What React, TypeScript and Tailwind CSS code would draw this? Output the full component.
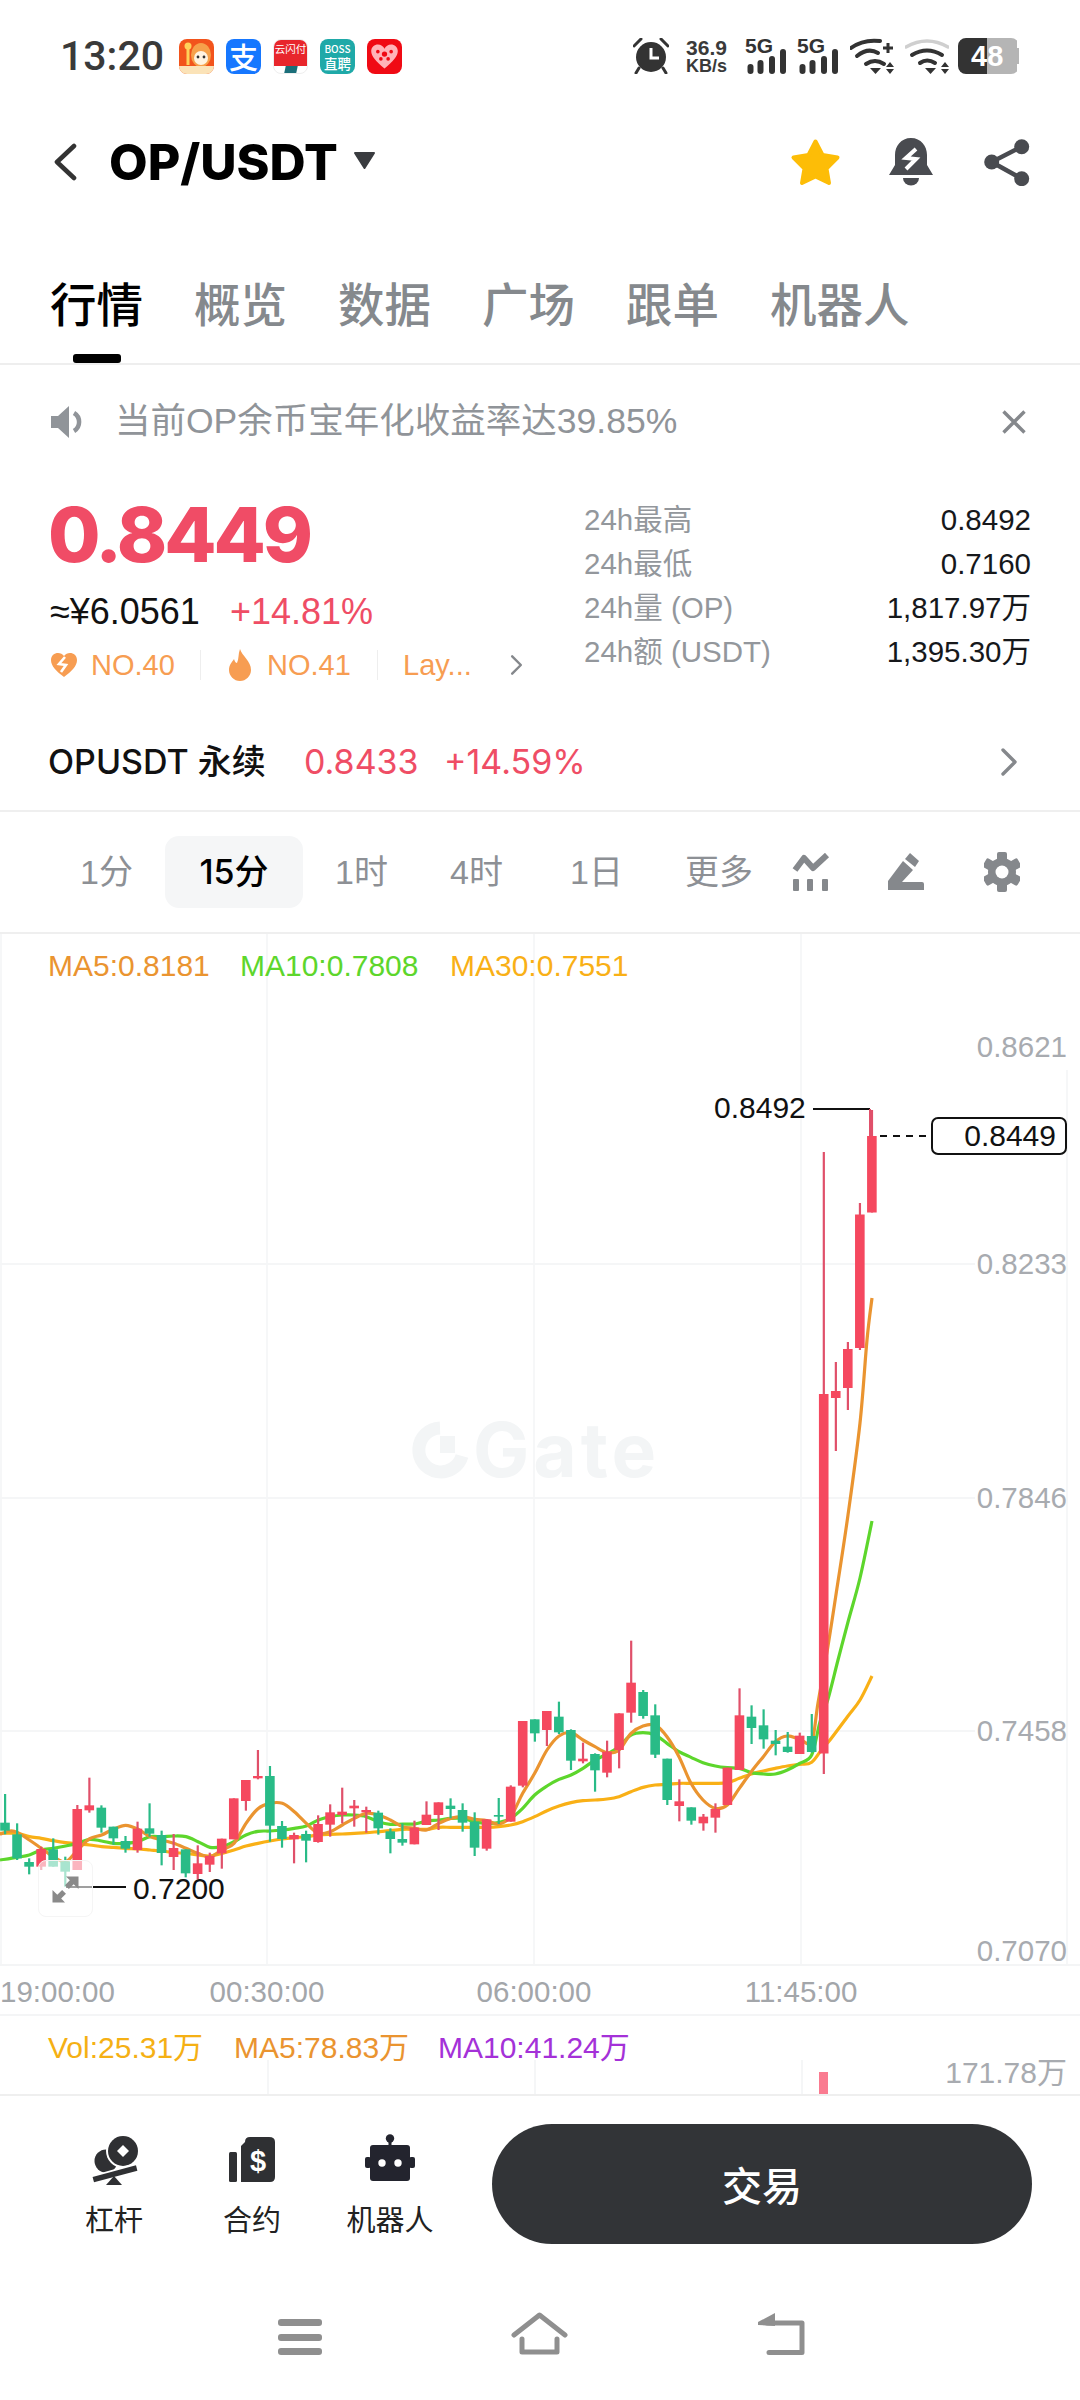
import React from "react";

type C = [number, number, number, number, number, number];
// [up, wickTop, bodyTop, bodyBottom, wickBottom] measured in zoom coordinates
const z5: number[][] = [
  [0,462,548,572,583],[0,550,583,655,660],[0,655,666,680,703],[1,620,627,680,690],[0,595,628,680,680],[0,650,664,695,740],
  [1,495,507,690,690],[1,413,496,511,518],[0,496,503,563,578],[0,560,560,595,614],[0,588,603,626,638],[1,545,566,630,638],
  [0,490,565,581,590],[0,572,585,639,676],[1,582,624,651,690],[0,628,628,700,712],[1,616,670,702,718],[1,638,648,674,696],
  [1,596,596,640,686],[1,475,475,598,598],[1,420,420,483,512],[1,330,408,415,418],[0,378,408,557,605],[0,543,558,597,623],
  [1,578,585,598,670],[0,572,582,602,667],[1,526,552,606,608],[1,493,517,554,590],[1,443,515,525,550],[1,480,497,505,560],
  [1,500,510,517,578],[0,512,518,565,584],[0,565,574,597,640],[0,550,597,608,617],
];
const z6: number[][] = [
  [1,662,683,733,733],[1,604,644,675,675],[1,607,607,645,690],[0,595,617,627,655],[0,610,630,668,695],[0,637,665,743,768],
  [1,658,658,746,752],[0,594,645,650,672],[1,556,560,665,665],[1,363,363,557,562],[0,358,358,400,425],[1,333,333,390,438],
  [0,305,350,397,402],[0,388,390,482,510],[1,428,476,484,490],[0,460,462,511,575],[1,422,455,518,532],[1,340,340,450,505],
  [1,122,248,338,368],[0,270,276,348,356],[0,313,346,464,474],[0,476,476,600,615],[1,538,604,618,664],[0,622,622,662,674],
  [1,642,650,670,692],[1,610,627,653,698],[1,503,503,615,615],[1,265,346,510,510],[0,316,350,384,432],[0,328,376,418,446],
  [0,390,422,432,466],[0,396,440,456,458],[1,398,407,462,462],[0,342,408,456,458],
];
const real: number[][] = [
  [1,1152,1394,1753.5,1774],[1,1362,1391,1398,1451],[1,1342,1349,1388,1410],[1,1203,1214.5,1348,1350],[1,1110,1136,1212.5,1212.5],
];
const candles: C[] = [
  ...z5.map((c, i): C => [5 + 12.04 * i, c[0], c[1] / 3 + 1640, c[2] / 3 + 1640, c[3] / 3 + 1640, c[4] / 3 + 1640]),
  ...z6.map((c, i): C => [5 + 12.04 * (i + 34), c[0], c[1] / 3 + 1600, c[2] / 3 + 1600, c[3] / 3 + 1600, c[4] / 3 + 1600]),
  ...real.map((c, i): C => [5 + 12.04 * (i + 68), c[0], c[1], c[2], c[3], c[4]]),
];

const a = (pts: number[][]) => pts.map(([x, y]) => [x / 3, y / 3 + 1640]);
const b = (pts: number[][]) => pts.map(([x, y]) => [x / 3 + 400, y / 3 + 1600]);

const ma5 = [
  ...a([[0,583],[30,573],[52,577],[88,600],[124,625],[160,650],[197,665],[233,630],[269,596],[305,585],[341,567],[377,556],[413,567],[450,590],[486,600],[521,610],[558,625],[594,640],[630,650],[666,630],[702,610],[738,550],[774,506],[810,490],[847,490],[883,515],[919,550],[955,580],[991,575],[1027,555],[1063,535],[1099,520],[1135,525],[1171,540]]),
  ...b([[8,680],[44,685],[80,690],[116,670],[152,655],[188,650],[224,658],[260,662],[296,672],[332,650],[368,580],[404,520],[441,450],[477,408],[513,398],[549,420],[585,440],[621,458],[657,450],[693,400],[729,378],[765,375],[801,410],[837,470],[873,550],[909,600],[946,625],[982,615],[1018,565],[1054,515],[1090,470],[1126,425],[1162,408],[1199,418],[1235,425]]),
  [818,1703],[828,1646],[837,1588],[848,1515],[860,1423],[867,1340],[872,1298],
];
const ma10 = [
  ...a([[0,660],[52,652],[88,645],[124,630],[160,625],[197,618],[233,610],[269,598],[305,603],[341,610],[377,610],[413,605],[450,590],[486,590],[521,588],[558,590],[594,605],[630,622],[666,620],[702,605],[738,585],[774,574],[810,573],[847,570],[883,565],[919,558],[955,540],[991,530],[1027,525],[1063,525],[1099,530],[1135,545],[1171,553]]),
  ...b([[8,672],[44,672],[80,663],[116,660],[152,655],[188,655],[224,665],[260,670],[296,668],[332,655],[368,625],[404,585],[441,558],[477,538],[513,525],[549,505],[585,480],[621,462],[657,440],[693,405],[729,398],[765,405],[801,430],[837,455],[873,472],[909,488],[946,498],[982,503],[1018,505],[1054,518],[1090,522],[1126,522],[1162,510],[1199,490],[1235,465]]),
  [820,1722],[828,1699],[838,1660],[848,1622],[860,1578],[872,1521],
];
const ma30 = [
  ...a([[0,580],[52,580],[88,590],[124,595],[160,602],[197,608],[233,612],[269,615],[305,620],[341,622],[377,625],[413,627],[450,630],[486,633],[521,638],[558,640],[594,645],[630,648],[666,640],[702,630],[738,618],[774,610],[810,603],[847,597],[883,593],[919,590],[955,585],[991,583],[1027,582],[1063,580],[1099,578],[1135,575],[1171,572]]),
  ...b([[8,688],[44,688],[80,688],[116,682],[152,682],[188,682],[224,682],[260,682],[296,680],[332,675],[368,665],[404,650],[441,632],[477,618],[513,608],[549,602],[585,600],[621,597],[657,590],[693,575],[729,562],[765,555],[801,553],[837,550],[873,550],[909,550],[946,550],[982,548],[1018,535],[1054,522],[1090,513],[1126,505],[1162,498],[1199,493],[1235,487],[1271,440]]),
  [830,1740],[848,1716],[860,1700],[872,1676],
];

function smooth(p: number[][]) {
  let d = `M${p[0][0]} ${p[0][1]}`;
  for (let i = 0; i < p.length - 1; i++) {
    const p0 = p[i - 1] || p[i];
    const p1 = p[i];
    const p2 = p[i + 1];
    const p3 = p[i + 2] || p2;
    d += ` C${p1[0] + (p2[0] - p0[0]) / 6} ${p1[1] + (p2[1] - p0[1]) / 6} ${p2[0] - (p3[0] - p1[0]) / 6} ${p2[1] - (p3[1] - p1[1]) / 6} ${p2[0]} ${p2[1]}`;
  }
  return d;
}

function Chart() {
  return (
    <svg viewBox="0 934 1080 1030" className="absolute inset-0 w-[1080px] h-[1030px]">
      {[267, 534, 801, 1067, 1].map((x) => (
        <line key={x} x1={x} x2={x} y1={x === 1067 ? 1070 : 934} y2={1964} stroke="#f6f7f8" strokeWidth="2" />
      ))}
      {[1264, 1498, 1731].map((y) => (
        <line key={y} x1={0} x2={975} y1={y} y2={y} stroke="#f5f6f7" strokeWidth="2" />
      ))}
      <path d={smooth(ma30)} fill="none" stroke="#f9b016" strokeWidth="3.2" />
      <path d={smooth(ma10)} fill="none" stroke="#5dd62c" strokeWidth="3.2" />
      <path d={smooth(ma5)} fill="none" stroke="#ea9430" strokeWidth="3.2" />
      {candles.map(([x, up, wt, bt, bb, wb], i) => {
        const col = up ? "#f5485f" : "#29bb87";
        return (
          <g key={i}>
            <rect x={x - 1} y={wt} width={2.2} height={wb - wt} fill={up ? "#e0506a" : col} />
            <rect x={x - 4.8} y={bt} width={9.6} height={bb - bt} fill={col} />
          </g>
        );
      })}
      <line x1="813" x2="870" y1="1109" y2="1109" stroke="#111" strokeWidth="2" />
      <line x1="870" x2="870" y1="1109" y2="1136" stroke="#e0506a" strokeWidth="2" />
      <line x1="880" x2="931" y1="1136" y2="1136" stroke="#111" strokeWidth="2" strokeDasharray="7 6" />
      <line x1="66" x2="126" y1="1887" y2="1887" stroke="#111" strokeWidth="2" />
    </svg>
  );
}

function Chevron({ cls }: { cls: string }) {
  return (
    <svg viewBox="0 0 18 28" className={cls} fill="none" stroke="currentColor" strokeWidth="3.4" strokeLinecap="round" strokeLinejoin="round">
      <path d="M3 2 L15 14 L3 26" />
    </svg>
  );
}

function Signal() {
  return (
    <div className="relative w-[42px] h-[36px]">
      <span className="absolute left-0 top-[-3px] text-[21px] leading-[22px] font-bold text-[#333]">5G</span>
      <svg viewBox="0 0 42 36" className="absolute inset-0 w-[42px] h-[36px]">
        <rect x="2.5" y="26" width="6" height="10" rx="3" fill="#333" />
        <rect x="12.5" y="22" width="6" height="14" rx="3" fill="#333" />
        <rect x="24" y="18" width="6" height="18" rx="3" fill="#333" />
        <rect x="35" y="11" width="6" height="25" rx="3" fill="#333" />
      </svg>
    </div>
  );
}

function WifiArrows() {
  return (
    <>
      <path d="M20 30 H31 L25.5 36Z" fill="#333" />
      <path d="M36 29 L40 24 L44 29Z M36 31 H44 L40 36Z" fill="#333" />
    </>
  );
}

function StatusBar() {
  return (
    <div className="h-[112px] flex items-center pl-[60px] text-[#333]">
      <span className="w-[102px] text-[41px] leading-none font-medium [font-family:Roboto,sans-serif] text-[#3a3a3a]">13:20</span>
      <div className="ml-[17px] flex gap-[12px]">
        <div className="relative w-[35px] h-[35px] rounded-[8px] bg-[#f2541c] overflow-hidden">
          <svg viewBox="0 0 35 35" className="w-[35px] h-[35px]">
            <circle cx="9" cy="7" r="3.5" fill="#ffd15a" />
            <rect x="7.5" y="10" width="3" height="16" fill="#ffd15a" />
            <ellipse cx="22" cy="16" rx="10" ry="12" fill="#f6a14a" />
            <ellipse cx="22" cy="19" rx="7" ry="7" fill="#fff3e0" />
            <circle cx="19" cy="18" r="1.4" fill="#333" />
            <circle cx="25" cy="18" r="1.4" fill="#333" />
            <rect x="0" y="27" width="35" height="8" fill="#fbe3b8" />
          </svg>
        </div>
        <div className="w-[35px] h-[35px] rounded-[8px] bg-[#1677ff] flex items-center justify-center text-white text-[29px] leading-none [font-family:'Noto_Sans_CJK_SC',sans-serif] font-medium">支</div>
        <div className="w-[35px] h-[35px] rounded-[8px] bg-white overflow-hidden flex flex-col border border-[#eee]">
          <div className="h-[26px] bg-[#e8262c] flex items-start justify-center pt-[3px]">
            <span className="text-white text-[10.5px] leading-[12px] whitespace-nowrap [font-family:'Noto_Sans_CJK_SC',sans-serif]">云闪付</span>
          </div>
          <div className="flex-1 flex justify-center items-center">
            <div className="w-[12px] h-[7px] bg-[#1b6f7a] skew-x-[-12deg]" />
          </div>
        </div>
        <div className="w-[35px] h-[35px] rounded-[8px] bg-[#1fa9a8] flex flex-col items-center justify-center text-white [font-family:'Noto_Sans_CJK_SC',sans-serif]">
          <span className="text-[10px] leading-[13px] font-medium">BOSS</span>
          <span className="text-[13.5px] leading-[16px] font-medium">直聘</span>
        </div>
        <div className="w-[35px] h-[35px] rounded-[8px] bg-[#f00a14] flex items-center justify-center">
          <svg viewBox="0 0 24 24" className="w-[29px] h-[29px]">
            <path d="M12 22 C5 16 1 12 1 7.5 C1 4 3.8 2 6.5 2 C9 2 11 3.5 12 5.5 C13 3.5 15 2 17.5 2 C20.2 2 23 4 23 7.5 C23 12 19 16 12 22Z" fill="#ffb3b8" />
            <circle cx="12" cy="10" r="2.2" fill="#f00a14" />
            <circle cx="6.5" cy="8" r="1.5" fill="#f00a14" />
            <circle cx="17.5" cy="8" r="1.5" fill="#f00a14" />
            <circle cx="9" cy="14" r="1.5" fill="#f00a14" />
            <circle cx="15" cy="14" r="1.5" fill="#f00a14" />
          </svg>
        </div>
      </div>
      <div className="ml-[231px] flex items-center">
        <svg viewBox="0 0 36 36" className="w-[36px] h-[36px]">
          <path d="M1 8 L8 1 M35 8 L28 1" stroke="#333" strokeWidth="3" strokeLinecap="round" />
          <path d="M6 30 L3 35 M30 30 L33 35" stroke="#333" strokeWidth="3" strokeLinecap="round" />
          <circle cx="18" cy="19" r="15" fill="#333" />
          <path d="M18 10 V20 H26" fill="none" stroke="#fff" strokeWidth="3" />
        </svg>
        <div className="ml-[16px] w-[43px] flex flex-col items-center font-bold text-[#3a3a3a]">
          <span className="text-[21px] leading-[19px] whitespace-nowrap">36.9</span>
          <span className="text-[18px] leading-[18px] whitespace-nowrap">KB/s</span>
        </div>
        <div className="ml-[17px]"><Signal /></div>
        <div className="ml-[10px]"><Signal /></div>
        <svg viewBox="0 0 44 36" className="ml-[11px] w-[44px] h-[36px]" fill="none">
          <path d="M1 10 Q13 1 30 3" stroke="#333" strokeWidth="4" strokeLinecap="round" />
          <path d="M7 18 Q18 9 28 15" stroke="#333" strokeWidth="4" strokeLinecap="round" />
          <path d="M16 26 Q25 20 34 26" stroke="#333" strokeWidth="4" strokeLinecap="round" />
          <path d="M33 10 H43 M38 5 V15" stroke="#333" strokeWidth="3" />
          <WifiArrows />
        </svg>
        <svg viewBox="0 0 44 36" className="ml-[11px] w-[44px] h-[36px]" fill="none">
          <path d="M1 9 Q22 -3 43 9" stroke="#cfcfcf" strokeWidth="3.5" strokeLinecap="round" />
          <path d="M7 17 Q22 8 37 17" stroke="#333" strokeWidth="4" strokeLinecap="round" />
          <path d="M15 25 Q22 20 30 25" stroke="#333" strokeWidth="4" strokeLinecap="round" />
          <WifiArrows />
        </svg>
        <div className="relative ml-[9px] w-[61px] h-[36px] rounded-[8px] overflow-hidden flex">
          <div className="w-[29px] bg-[#333]" />
          <div className="w-[30px] bg-[#b5b5b5]" />
          <div className="w-[2px] my-[10px] bg-[#b5b5b5]" />
          <span className="absolute left-[13px] top-0 text-white text-[29px] leading-[36px] font-bold">48</span>
        </div>
      </div>
    </div>
  );
}

function NavBar() {
  return (
    <div className="h-[100px] flex items-center">
      <svg viewBox="0 0 24 38" className="ml-[53px] w-[24px] h-[38px]" fill="none" stroke="#333" strokeWidth="4.6" strokeLinecap="round" strokeLinejoin="round">
        <path d="M21 3 L4 19 L21 35" />
      </svg>
      <span className="ml-[32px] w-[229px] text-[50px] leading-none font-extrabold text-black [font-family:Inter,sans-serif] whitespace-nowrap">OP/USDT</span>
      <svg viewBox="0 0 23 19" className="ml-[15px] w-[23px] h-[19px] mt-[-4px]">
        <path d="M2 2 H21 L11.5 17Z" fill="#3a3c40" stroke="#3a3c40" strokeWidth="2" strokeLinejoin="round" />
      </svg>
      <svg viewBox="0 0 51 48" className="ml-[414px] w-[51px] h-[48px]">
        <polygon points="25.5,3.5 32.5,17 47.5,19.5 36.5,30.5 39,45 25.5,38.5 12,45 14.5,30.5 3.5,19.5 18.5,17" fill="#fdbd07" stroke="#fdbd07" strokeWidth="4" strokeLinejoin="round" />
      </svg>
      <svg viewBox="0 0 44 48" className="ml-[48px] w-[44px] h-[48px]">
        <path d="M22 0 C32 0 38 8 38 17 V27 L44 37 H0 L6 27 V17 C6 8 12 0 22 0Z" fill="#494b50" />
        <path d="M27 11 L17 20 L27 21 L17 31" fill="none" stroke="#fff" strokeWidth="4" />
        <path d="M14 40 H30 A8 7.5 0 0 1 14 40Z" fill="#494b50" />
      </svg>
      <svg viewBox="0 0 47 47" className="ml-[51px] w-[47px] h-[47px]">
        <path d="M37.7 7.7 L7.7 23 L37.7 39.7" fill="none" stroke="#494b50" strokeWidth="4.5" />
        <circle cx="37.7" cy="7.7" r="7.5" fill="#494b50" />
        <circle cx="7.7" cy="23" r="7.5" fill="#494b50" />
        <circle cx="37.7" cy="39.7" r="7.5" fill="#494b50" />
      </svg>
    </div>
  );
}

function Tabs() {
  const tabs = ["概览", "数据", "广场", "跟单", "机器人"];
  return (
    <div className="h-[153px] border-b-2 border-[#eeeeee] pt-[60px] pl-[50px] flex gap-[51px] [font-family:'Noto_Sans_CJK_SC',sans-serif] text-[46.5px] leading-[60px] font-medium">
      <div className="flex flex-col items-center">
        <span className="text-black">行情</span>
        <div className="mt-[22px] w-[48px] h-[9px] rounded-[3px] bg-black" />
      </div>
      {tabs.map((t) => (
        <span key={t} className="text-[#85898d]">{t}</span>
      ))}
    </div>
  );
}

function Notice() {
  return (
    <div className="h-[114px] flex items-center pl-[51px] text-[#909499]">
      <svg viewBox="0 0 36 32" className="w-[36px] h-[32px]">
        <path d="M0 10 H7 L18 0 V32 L7 22 H0Z" fill="#909499" />
        <path d="M23 7 A10.5 10.5 0 0 1 23 25" fill="none" stroke="#909499" strokeWidth="4.5" />
      </svg>
      <span className="ml-[28px] w-[565px] text-[35.5px] leading-none whitespace-nowrap">当前OP余币宝年化收益率达39.85%</span>
      <svg viewBox="0 0 24 24" className="ml-[322px] w-[24px] h-[24px]" fill="none" stroke="#85888c" strokeWidth="3.4">
        <path d="M1.5 1.5 L22.5 22.5 M22.5 1.5 L1.5 22.5" />
      </svg>
    </div>
  );
}

function Stat({ k, v }: { k: string; v: string }) {
  return (
    <div className="h-[44px] flex items-center justify-between text-[29.5px] leading-none">
      <span className="text-[#93979c]">{k}</span>
      <span className="text-[#16181b]">{v}</span>
    </div>
  );
}

function PriceBlock() {
  return (
    <div className="h-[235px] flex pl-[50px]">
      <div className="w-[534px]">
        <div className="mt-[8px] ml-[-2px] h-[94px] flex items-center text-[76px] leading-none font-extrabold tracking-[-3px] text-[#f04c66] [font-family:Inter,sans-serif]">0.8449</div>
        <div className="mt-[9px] h-[44px] flex items-center text-[36px] leading-none">
          <span className="w-[180px] text-[#111]">≈¥6.0561</span>
          <span className="text-[#ef4d65]">+14.81%</span>
        </div>
        <div className="mt-[9px] h-[44px] flex items-center text-[29px] leading-none text-[#f79d52]">
          <svg viewBox="0 0 28 26" className="w-[28px] h-[26px]">
            <path d="M14 25 C6 19 1 14 1 8 C1 3.5 4.5 1 8 1 C10.5 1 12.5 2 14 4 C15.5 2 17.5 1 20 1 C23.5 1 27 3.5 27 8 C27 14 22 19 14 25Z" fill="#f79d52" />
            <path d="M15 5 L9 12 L16 13 L11 20" fill="none" stroke="#fff" strokeWidth="2.6" />
          </svg>
          <span className="ml-[13px] w-[83px]">NO.40</span>
          <div className="ml-[26px] w-[1px] h-[30px] bg-[#eeeeee]" />
          <svg viewBox="0 0 24 32" className="ml-[27px] w-[24px] h-[32px]">
            <path d="M12 0 C14 7 23 12 23 21 C23 27 18 32 12 32 C6 32 1 27 1 21 C1 16 4 13 6 10 C7 13 8 14 9 14 C11 10 10 5 12 0Z" fill="#f79d52" />
          </svg>
          <span className="ml-[15px] w-[83px]">NO.41</span>
          <div className="ml-[27px] w-[1px] h-[30px] bg-[#eeeeee]" />
          <span className="ml-[25px] w-[67px]">Lay...</span>
          <Chevron cls="ml-[40px] w-[13px] h-[22px] text-[#85888c]" />
        </div>
      </div>
      <div className="w-[447px] pt-[19px]">
        <Stat k="24h最高" v="0.8492" />
        <Stat k="24h最低" v="0.7160" />
        <Stat k="24h量 (OP)" v="1,817.97万" />
        <Stat k="24h额 (USDT)" v="1,395.30万" />
      </div>
    </div>
  );
}

function PerpRow() {
  return (
    <div className="h-[98px] border-b-2 border-[#efefef] flex items-center pl-[48px] text-[34px] leading-none [font-family:Inter,'Noto_Sans_CJK_SC',sans-serif]">
      <span className="w-[256px] text-[#111] font-medium">OPUSDT 永续</span>
      <span className="w-[140px] text-[#ef4d65]">0.8433</span>
      <span className="w-[556px] text-[#ef4d65]">+14.59%</span>
      <Chevron cls="w-[18px] h-[28px] text-[#85888c]" />
    </div>
  );
}

function Timeframes() {
  return (
    <div className="h-[122px] border-b-2 border-[#efefef] flex items-center text-[34px] leading-none text-[#8d9095]">
      <span className="ml-[80px] w-[85px]">1分</span>
      <div className="w-[138px] h-[72px] rounded-[14px] bg-[#f5f6f7] flex items-center justify-center font-medium text-black [font-family:Inter,'Noto_Sans_CJK_SC',sans-serif]">15分</div>
      <span className="ml-[32px] w-[115px]">1时</span>
      <span className="w-[120px]">4时</span>
      <span className="w-[115px]">1日</span>
      <span className="w-[107px]">更多</span>
      <svg viewBox="0 0 38 38" className="w-[38px] h-[38px]" fill="#85888c">
        <path d="M3 17 L12 5 L21 15 L35 2" fill="none" stroke="#85888c" strokeWidth="6" strokeLinejoin="round" />
        <rect x="1" y="26" width="6" height="12" rx="1" />
        <rect x="15" y="26" width="6" height="12" rx="1" />
        <rect x="30" y="26" width="6" height="12" rx="1" />
      </svg>
      <svg viewBox="0 0 38 38" className="ml-[57px] w-[38px] h-[38px]" fill="#85888c">
        <path d="M1 37 V28 L16 8 L26 17 L15 29 H35 A2 2 0 0 1 37 31 V37Z" />
        <path d="M18 6 L23 0 L32 8 L28 14Z" />
      </svg>
      <svg viewBox="0 0 36 40" className="ml-[59px] w-[36px] h-[40px]">
        <circle cx="18" cy="20" r="14" fill="#85888c" />
        <g fill="#85888c">
          <rect x="13" y="0" width="10" height="40" rx="2" />
          <rect x="13" y="0" width="10" height="40" rx="2" transform="rotate(60 18 20)" />
          <rect x="13" y="0" width="10" height="40" rx="2" transform="rotate(120 18 20)" />
        </g>
        <circle cx="18" cy="20" r="6.5" fill="#fff" />
      </svg>
    </div>
  );
}

function ChartArea() {
  return (
    <div className="relative h-[1030px] text-[29.5px] leading-[30px] text-[#a8abb0]">
      <Chart />
      <div className="absolute left-[48px] top-[17px] flex text-[30px]">
        <span className="w-[192px] text-[#ea9430]">MA5:0.8181</span>
        <span className="w-[210px] text-[#5dd62c]">MA10:0.7808</span>
        <span className="text-[#f9b016]">MA30:0.7551</span>
      </div>
      <div className="absolute left-[473px] top-[474px] text-[75px] leading-[84px] tracking-[4px] font-bold text-[#f3f5f6] [font-family:Inter,sans-serif]">Gate</div>
      <svg viewBox="0 0 60 60" className="absolute left-[410px] top-[486px] w-[60px] h-[60px]">
        <path d="M30 8 A22 22 0 1 0 52 36 " fill="none" stroke="#f3f5f6" strokeWidth="13" />
        <rect x="30" y="16" width="15" height="17" fill="#f3f5f6" />
      </svg>
      <span className="absolute right-[13px] top-[98px]">0.8621</span>
      <span className="absolute right-[13px] top-[315px]">0.8233</span>
      <span className="absolute right-[13px] top-[549px]">0.7846</span>
      <span className="absolute right-[13px] top-[782px]">0.7458</span>
      <span className="absolute right-[13px] top-[1002px]">0.7070</span>
      <span className="absolute left-[714px] top-[159px] text-[#111] text-[30px]">0.8492</span>
      <span className="absolute left-[133px] top-[940px] text-[#111] text-[30px]">0.7200</span>
      <div className="absolute left-[931px] top-[183px] w-[136px] h-[38px] border-2 border-[#111] rounded-[7px] bg-white flex items-center justify-end pr-[9px] text-[#111] text-[30px]">0.8449</div>
      <div className="absolute left-[38px] top-[926px] w-[55px] h-[57px] rounded-[8px] bg-white/60 border border-[#f5f5f5]">
        <svg viewBox="0 0 55 57" className="w-[53px] h-[55px]">
          <path d="M41 16 V29 L36 24 L31 29 L27 25 L32 20 L28 16Z" fill="#8a8a8a" />
          <path d="M14 43 V30 L19 35 L24 30 L28 34 L23 39 L27 43Z" fill="#8a8a8a" />
        </svg>
      </div>
    </div>
  );
}

function TimeAxis() {
  return (
    <div className="relative h-[52px] border-b-2 border-t-2 border-[#f4f5f6] text-[29.5px] leading-none text-[#a3a6aa]">
      <span className="absolute left-0 top-[11px]">19:00:00</span>
      <span className="absolute left-[267px] top-[11px] -translate-x-1/2">00:30:00</span>
      <span className="absolute left-[534px] top-[11px] -translate-x-1/2">06:00:00</span>
      <span className="absolute left-[801px] top-[11px] -translate-x-1/2">11:45:00</span>
    </div>
  );
}

function Volume() {
  return (
    <div className="relative h-[80px] border-b-2 border-[#efefef] text-[30px] leading-[30px]">
      <div className="absolute left-[48px] top-[17px] flex">
        <span className="w-[186px] text-[#f5b014]">Vol:25.31万</span>
        <span className="w-[204px] text-[#ea9430]">MA5:78.83万</span>
        <span className="text-[#a431d8]">MA10:41.24万</span>
      </div>
      <span className="absolute right-[13px] top-[42px] text-[#a8abb0]">171.78万</span>
      <div className="absolute left-[267px] top-[44px] w-[2px] h-[34px] bg-[#f5f6f7]" />
      <div className="absolute left-[534px] top-[44px] w-[2px] h-[34px] bg-[#f5f6f7]" />
      <div className="absolute left-[801px] top-[44px] w-[2px] h-[34px] bg-[#f5f6f7]" />
      <div className="absolute left-[819px] top-[56px] w-[9px] h-[22px] bg-[#fa7b90]" />
    </div>
  );
}

function BottomBar() {
  return (
    <div className="h-[184px] flex pl-[45px] pt-[28px]">
      <div className="w-[138px] flex flex-col items-center pt-[10px]">
        <svg viewBox="0 0 52 54" className="w-[52px] h-[54px]">
          <circle cx="18" cy="27" r="11.5" fill="#2f3033" />
          <circle cx="35" cy="17" r="17" fill="#fff" />
          <circle cx="35" cy="17" r="15" fill="#2f3033" />
          <path d="M35 11 L41 17 L35 23 L29 17Z" fill="#fff" />
          <path d="M0 48 L52 33" stroke="#fff" strokeWidth="10" />
          <path d="M5.3 45.7 L48.7 34" stroke="#2f3033" strokeWidth="5.5" />
          <path d="M26 42 L34 51 H18Z" fill="#2f3033" />
        </svg>
        <span className="mt-[12px] text-[29px] leading-[36px] text-[#222] [font-family:'Noto_Sans_CJK_SC',sans-serif]">杠杆</span>
      </div>
      <div className="w-[138px] flex flex-col items-center pt-[10px]">
        <svg viewBox="0 0 46 54" className="w-[46px] h-[54px]">
          <rect x="0" y="18" width="8" height="30" rx="1.5" fill="#2f3033" />
          <path d="M16 8 Q16 3 21 3 H40 Q46 3 46 8 V43 Q46 48 41 48 H12 V12Z" fill="#2f3033" />
          <text x="29" y="37" textAnchor="middle" fontSize="29" fontWeight="700" fill="#fff" fontFamily="'Liberation Sans', sans-serif">$</text>
        </svg>
        <span className="mt-[12px] text-[29px] leading-[36px] text-[#222] [font-family:'Noto_Sans_CJK_SC',sans-serif]">合约</span>
      </div>
      <div className="w-[138px] flex flex-col items-center pt-[10px]">
        <svg viewBox="0 0 52 54" className="w-[52px] h-[54px]">
          <circle cx="26" cy="4.5" r="4.2" fill="#23242e" />
          <rect x="24.5" y="5" width="3" height="8" fill="#23242e" />
          <rect x="6" y="11" width="40" height="36" rx="3" fill="#23242e" />
          <rect x="1" y="23" width="6" height="11" rx="2" fill="#23242e" />
          <rect x="45" y="23" width="6" height="11" rx="2" fill="#23242e" />
          <circle cx="18" cy="29" r="3.7" fill="#fff" />
          <circle cx="34" cy="29" r="3.7" fill="#fff" />
        </svg>
        <span className="mt-[12px] text-[29px] leading-[36px] text-[#222] whitespace-nowrap [font-family:'Noto_Sans_CJK_SC',sans-serif]">机器人</span>
      </div>
      <div className="ml-[33px] w-[540px] h-[120px] rounded-full bg-[#323437] flex items-center justify-center text-white text-[40px] leading-none font-medium [font-family:'Noto_Sans_CJK_SC',sans-serif]">交易</div>
    </div>
  );
}

function SystemNav() {
  return (
    <div className="flex pl-[278px] pt-[32px]">
      <div className="w-[44px] h-[36px] mt-[7px] flex flex-col justify-between">
        <div className="h-[7px] rounded-[3px] bg-[#8f8f8f]" />
        <div className="h-[7px] rounded-[3px] bg-[#8f8f8f]" />
        <div className="h-[7px] rounded-[3px] bg-[#8f8f8f]" />
      </div>
      <svg viewBox="0 0 57 43" className="ml-[189px] w-[57px] h-[43px]" fill="none" stroke="#8f8f8f" strokeWidth="5" strokeLinecap="round" strokeLinejoin="round">
        <path d="M3 23 L28.5 3 L54 23" />
        <path d="M11 27 V40 H46 V27" />
      </svg>
      <svg viewBox="0 0 48 43" className="ml-[189px] w-[48px] h-[43px]" fill="none">
        <path d="M10 11 H45 V40.5 H12" stroke="#8f8f8f" strokeWidth="5" strokeLinecap="round" strokeLinejoin="round" />
        <path d="M18 1 L1 10 V13 L18 14Z" fill="#8f8f8f" />
      </svg>
    </div>
  );
}

export default function App() {
  return (
    <div className="w-[1080px] h-[2400px] bg-white overflow-hidden flex flex-col [font-family:'Liberation_Sans','Noto_Sans_CJK_SC',sans-serif]">
      <StatusBar />
      <NavBar />
      <Tabs />
      <Notice />
      <PriceBlock />
      <PerpRow />
      <Timeframes />
      <ChartArea />
      <TimeAxis />
      <Volume />
      <BottomBar />
      <SystemNav />
    </div>
  );
}
